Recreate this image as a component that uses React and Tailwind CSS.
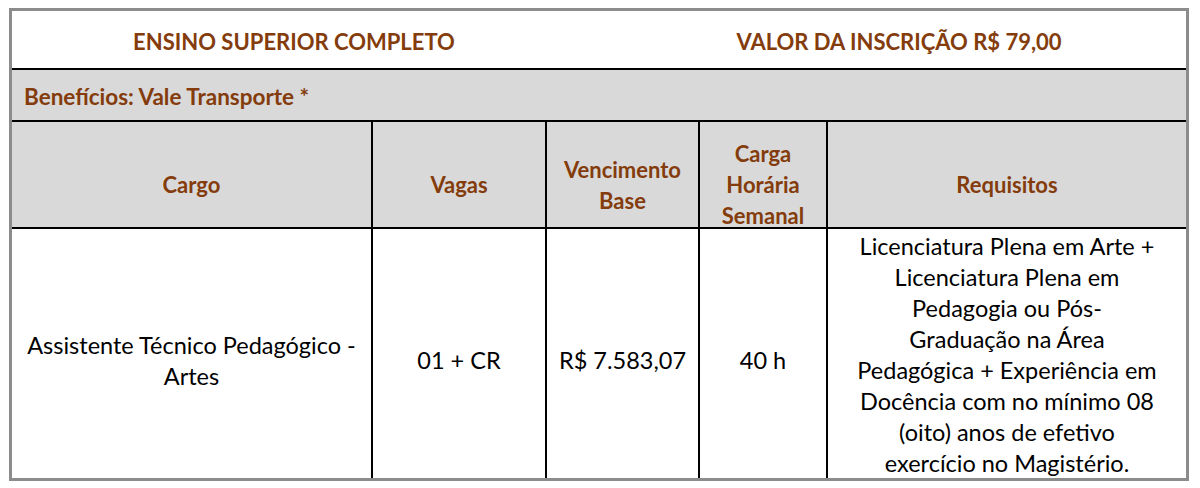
export default function App() {
  const font = { fontFamily: "Lato, 'Liberation Sans', sans-serif" };

  return (
    <div className="w-[1200px] h-[488px] bg-white pt-[8px] pl-[9px]" style={font}>
      <div className="w-[1180px] border-[3px] border-[#8c8c8c] flex flex-col">
        {/* title row */}
        <div className="h-[59px] flex items-center border-b-2 border-black text-[#843c0c] font-bold text-[22px]">
          <div className="w-[564px] text-center pt-[4px]">ENSINO SUPERIOR COMPLETO</div>
          <div className="flex-1 text-center pl-[36px] pt-[4px]">VALOR DA INSCRIÇÃO R$ 79,00</div>
        </div>

        {/* benefits row */}
        <div className="h-[52px] flex items-center bg-[#d9d9d9] border-b-2 border-black px-[12px] pt-[3px] text-[#843c0c] font-bold text-[22.5px]">
          Benefícios: Vale Transporte *
        </div>

        {/* header row */}
        <div className="h-[107px] flex bg-[#d9d9d9] border-b-2 border-black text-[#843c0c] font-bold text-[22px] leading-[31px] text-center">
          <div className="w-[361px] border-r-2 border-black flex items-center justify-center pt-[20px]">Cargo</div>
          <div className="w-[174px] border-r-2 border-black flex items-center justify-center pt-[20px]">Vagas</div>
          <div className="w-[153px] border-r-2 border-black flex items-center justify-center pt-[20px]">
            Vencimento<br />Base
          </div>
          <div className="w-[128px] border-r-2 border-black flex items-center justify-center pt-[20px]">
            Carga<br />Horária<br />Semanal
          </div>
          <div className="flex-1 flex items-center justify-center pt-[20px]">Requisitos</div>
        </div>

        {/* data row */}
        <div className="h-[249px] flex text-black text-[23.5px] leading-[31px] text-center">
          <div className="w-[361px] border-r-2 border-black flex items-center justify-center pt-[14px]">
            Assistente Técnico Pedagógico -<br />Artes
          </div>
          <div className="w-[174px] border-r-2 border-black flex items-center justify-center pt-[14px]">01 + CR</div>
          <div className="w-[153px] border-r-2 border-black flex items-center justify-center pt-[14px]">R$ 7.583,07</div>
          <div className="w-[128px] border-r-2 border-black flex items-center justify-center pt-[14px]">40 h</div>
          <div className="flex-1 flex items-center justify-center pt-[2px]">
            <div>
              Licenciatura Plena em Arte +<br />
              Licenciatura Plena em<br />
              Pedagogia ou Pós-<br />
              Graduação na Área<br />
              Pedagógica + Experiência em<br />
              Docência com no mínimo 08<br />
              (oito) anos de efetivo<br />
              exercício no Magistério.
            </div>
          </div>
        </div>
      </div>
    </div>
  );
}
